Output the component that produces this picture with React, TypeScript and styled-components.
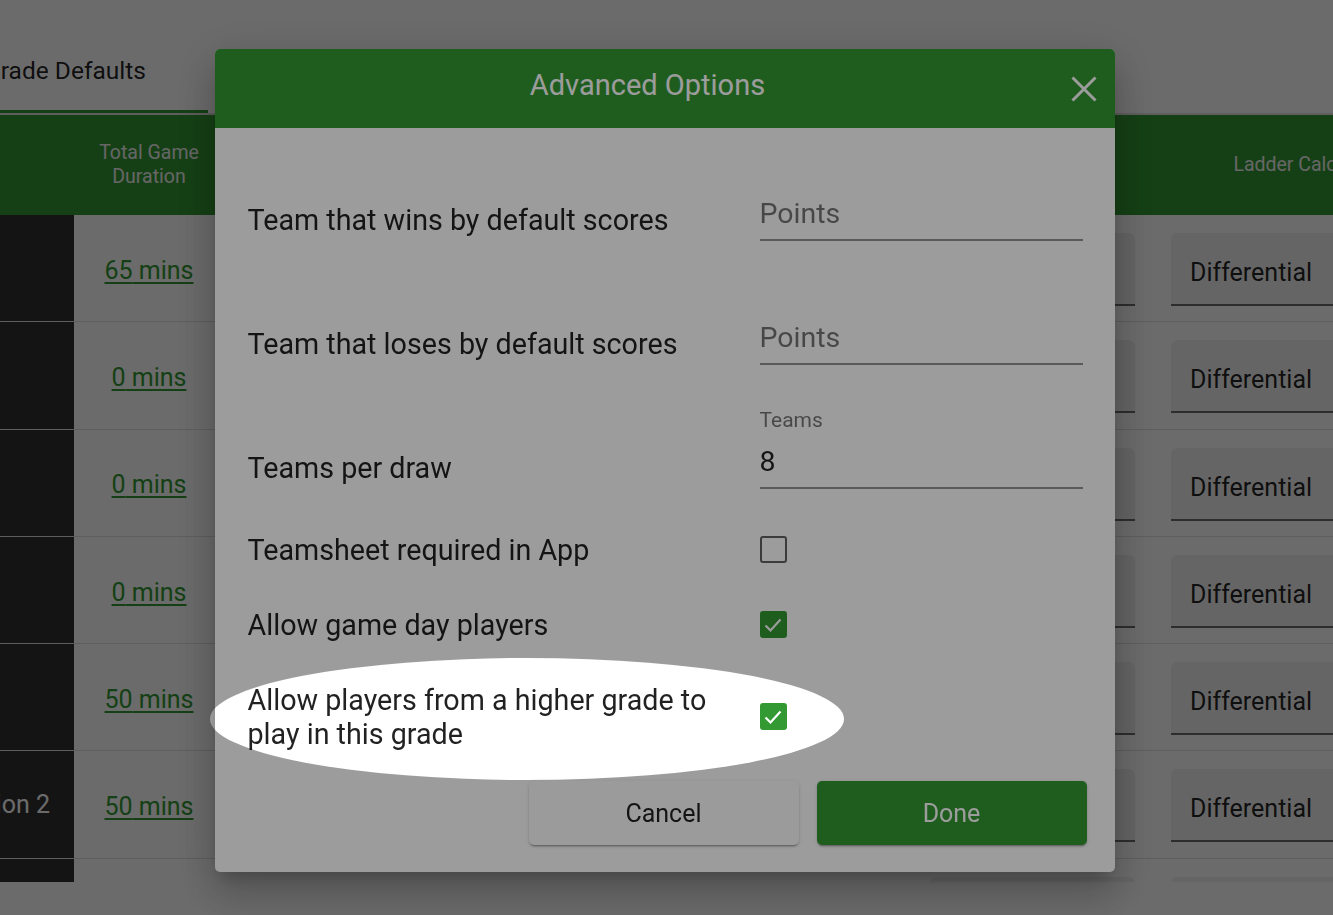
import React from "react";
import styled, { createGlobalStyle } from "styled-components";

const GREEN = "#339933";

const GlobalStyle = createGlobalStyle`
  html, body {
    margin: 0;
    padding: 0;
    background: #fff;
    overflow: hidden;
    font-family: Roboto, "Noto Sans", Arial, sans-serif;
  }
  * { box-sizing: border-box; }
`;

const COLS = "152px 150px 344px 344px 241px 323px";

// page behind the dialog (scrolled sideways, so it starts left of the window)
const Scroller = styled.div`
  width: 100vw;
  height: 100vh;
  overflow: hidden;
`;

const Sheet = styled.div`
  width: 1554px;
  margin-left: -78px;
`;

const TabBar = styled.div`
  display: flex;
  height: 115px;
  padding-top: 41px;
  border-bottom: 2px solid #e0e0e0;
`;

const Tab = styled.div<{ $active?: boolean }>`
  width: 286px;
  height: 72px;
  display: flex;
  align-items: center;
  justify-content: center;
  padding-bottom: 10px;
  font-size: 24.5px;
  color: rgba(0, 0, 0, 0.87);
  white-space: nowrap;
  border-bottom: 3px solid ${(p) => (p.$active ? GREEN : "transparent")};
`;

const TableViewport = styled.div`
  height: 767px;
  overflow: hidden;
`;

const HeadRow = styled.div`
  display: grid;
  grid-template-columns: ${COLS};
  height: 100px;
  background: ${GREEN};
`;

const HeadCell = styled.div`
  display: flex;
  align-items: center;
  justify-content: center;
  padding: 0 16px;
  text-align: center;
  font-size: 19.5px;
  line-height: 24px;
  color: #f2f2f2;
`;

const Row = styled.div`
  display: grid;
  grid-template-columns: ${COLS};
  height: 107.3px;
  border-bottom: 1px solid #e0e0e0;
`;

const NameCell = styled.div`
  background: #303030;
  display: flex;
  align-items: center;
  justify-content: flex-end;
  padding-right: 24px;
  font-size: 25px;
  color: #fff;
`;

const Cell = styled.div`
  display: flex;
  align-items: center;
  justify-content: center;
  padding-top: 4px;
`;

const SelectCell = styled.div`
  padding: 18px 18px 0;
`;

const DurationLink = styled.a`
  font-size: 25px;
  color: ${GREEN};
  text-decoration: underline;
  text-underline-offset: 3px;
`;

const FilledSelect = styled.div`
  height: 73px;
  display: flex;
  align-items: center;
  padding: 8px 19px 0;
  background: rgba(0, 0, 0, 0.06);
  border-radius: 6px 6px 0 0;
  border-bottom: 2px solid rgba(0, 0, 0, 0.55);
  font-size: 25px;
  color: rgba(0, 0, 0, 0.87);
  white-space: nowrap;
  overflow: hidden;
`;

// dialog
const Backdrop = styled.div`
  position: fixed;
  inset: 0;
  background: rgba(0, 0, 0, 0.31);
  display: flex;
  justify-content: center;
  align-items: flex-start;
  padding: 49px 4px 0 0;
`;

const Dialog = styled.div`
  width: 900px;
  background: #fff;
  border-radius: 5px;
  overflow: hidden;
  box-shadow: 0 11px 15px -7px rgba(0, 0, 0, 0.2), 0 24px 38px 3px rgba(0, 0, 0, 0.14),
    0 9px 46px 8px rgba(0, 0, 0, 0.12);
`;

const DialogHeader = styled.div`
  height: 79px;
  background: ${GREEN};
  display: flex;
  align-items: center;
  padding: 0 14px;
`;

const DialogTitle = styled.h2`
  flex: 1;
  margin: 0;
  padding-bottom: 8px;
  text-align: center;
  font-size: 29px;
  font-weight: 400;
  color: #fff;
`;

const CloseButton = styled.button`
  width: 34px;
  height: 34px;
  padding: 0;
  border: 0;
  background: none;
  display: flex;
  align-items: center;
  justify-content: center;
  cursor: pointer;
`;

const DialogBody = styled.div`
  padding: 0 28px 27px 33px;
`;

const FieldRow = styled.div`
  height: 124px;
  display: grid;
  grid-template-columns: 1fr 323px;
  column-gap: 20px;
  align-items: end;
  padding: 0 4px 11px 0;
`;

const CheckRow = styled.div<{ $first?: boolean }>`
  display: grid;
  grid-template-columns: 1fr 323px;
  column-gap: 20px;
  align-items: center;
  padding: 20.5px 4px 20.5px 0;
  margin-top: ${(p) => (p.$first ? "12px" : "0")};
`;

const RowLabel = styled.div<{ $field?: boolean }>`
  font-size: 28.7px;
  line-height: ${(p) => (p.$field ? "32px" : "34px")};
  padding-bottom: ${(p) => (p.$field ? "5px" : "0")};
  color: rgba(0, 0, 0, 0.87);
`;

const Field = styled.label`
  display: flex;
  flex-direction: column;
`;

const FieldLabel = styled.span`
  height: 24px;
  font-size: 21px;
  line-height: 24px;
  color: rgba(0, 0, 0, 0.54);
`;

const FieldInput = styled.input`
  margin-top: 9px;
  padding: 0 0 6px;
  height: 48px;
  line-height: 40px;
  border: 0;
  border-bottom: 2px solid rgba(0, 0, 0, 0.42);
  background: transparent;
  font-family: inherit;
  font-size: 28.5px;
  color: rgba(0, 0, 0, 0.87);
  outline: none;
  &::placeholder {
    color: rgba(0, 0, 0, 0.54);
    opacity: 1;
  }
`;

const Box = styled.span<{ $checked?: boolean }>`
  width: 27px;
  height: 27px;
  border-radius: 3px;
  display: flex;
  align-items: center;
  justify-content: center;
  background: ${(p) => (p.$checked ? GREEN : "transparent")};
  border: ${(p) => (p.$checked ? "none" : "2.5px solid rgba(0, 0, 0, 0.62)")};
`;

const Actions = styled.div`
  display: flex;
  justify-content: flex-end;
  gap: 18px;
  margin-top: 10px;
`;

const Button = styled.button<{ $primary?: boolean }>`
  width: 270px;
  height: 64px;
  border: 0;
  border-radius: 5px;
  font-family: inherit;
  font-size: 25px;
  cursor: pointer;
  background: ${(p) => (p.$primary ? GREEN : "#fdfdfd")};
  color: ${(p) => (p.$primary ? "#fff" : "rgba(0, 0, 0, 0.87)")};
  box-shadow: 0 3px 1px -2px rgba(0, 0, 0, 0.2), 0 2px 2px 0 rgba(0, 0, 0, 0.14),
    0 1px 5px 0 rgba(0, 0, 0, 0.12);
`;

// the highlight ring: everything outside the ellipse gets shaded
const Spotlight = styled.div`
  position: fixed;
  left: 210px;
  top: 658px;
  width: 634px;
  height: 122px;
  border-radius: 50%;
  box-shadow: 0 0 0 2400px rgba(0, 0, 0, 0.39);
  pointer-events: none;
`;

const rows = [
  { name: "", mins: 65 },
  { name: "", mins: 0 },
  { name: "", mins: 0 },
  { name: "", mins: 0 },
  { name: "", mins: 50 },
  { name: "Division 2", mins: 50 },
  { name: "", mins: 40 },
];

const Checkbox = ({ checked }: { checked?: boolean }) => (
  <Box $checked={checked}>
    {checked && (
      <svg width="22" height="22" viewBox="0 0 22 22" fill="none">
        <polyline points="3.5,11.5 8.5,16.5 18.5,5.5" stroke="#fff" strokeWidth="2.2" />
      </svg>
    )}
  </Box>
);

export default function App() {
  return (
    <>
      <GlobalStyle />
      <Scroller>
        <Sheet>
          <TabBar>
            <Tab $active>Grade Defaults</Tab>
          </TabBar>
          <TableViewport>
            <HeadRow>
              <HeadCell />
              <HeadCell>Total Game Duration</HeadCell>
              <HeadCell>Halves</HeadCell>
              <HeadCell>Break</HeadCell>
              <HeadCell>Points</HeadCell>
              <HeadCell>Ladder Calculation</HeadCell>
            </HeadRow>
            {rows.map((r, i) => (
              <Row key={i}>
                <NameCell>{r.name}</NameCell>
                <Cell>
                  <DurationLink>{r.mins} mins</DurationLink>
                </Cell>
                <Cell />
                <Cell />
                <SelectCell>
                  <FilledSelect>3</FilledSelect>
                </SelectCell>
                <SelectCell>
                  <FilledSelect>Differential</FilledSelect>
                </SelectCell>
              </Row>
            ))}
          </TableViewport>
        </Sheet>
      </Scroller>

      <Backdrop>
        <Dialog>
          <DialogHeader>
            <DialogTitle>Advanced Options</DialogTitle>
            <CloseButton aria-label="close">
              <svg width="26" height="26" viewBox="0 0 26 26">
                <path d="M1.5 1.5 L24.5 24.5 M24.5 1.5 L1.5 24.5" stroke="#fff" strokeWidth="3" />
              </svg>
            </CloseButton>
          </DialogHeader>
          <DialogBody>
            <FieldRow>
              <RowLabel $field>Team that wins by default scores</RowLabel>
              <Field>
                <FieldLabel />
                <FieldInput placeholder="Points" readOnly />
              </Field>
            </FieldRow>
            <FieldRow>
              <RowLabel $field>Team that loses by default scores</RowLabel>
              <Field>
                <FieldLabel />
                <FieldInput placeholder="Points" readOnly />
              </Field>
            </FieldRow>
            <FieldRow>
              <RowLabel $field>Teams per draw</RowLabel>
              <Field>
                <FieldLabel>Teams</FieldLabel>
                <FieldInput value="8" readOnly />
              </Field>
            </FieldRow>
            <CheckRow $first>
              <RowLabel>Teamsheet required in App</RowLabel>
              <Checkbox />
            </CheckRow>
            <CheckRow>
              <RowLabel>Allow game day players</RowLabel>
              <Checkbox checked />
            </CheckRow>
            <CheckRow>
              <RowLabel>Allow players from a higher grade to play in this grade</RowLabel>
              <Checkbox checked />
            </CheckRow>
            <Actions>
              <Button>Cancel</Button>
              <Button $primary>Done</Button>
            </Actions>
          </DialogBody>
        </Dialog>
      </Backdrop>
      <Spotlight />
    </>
  );
}
